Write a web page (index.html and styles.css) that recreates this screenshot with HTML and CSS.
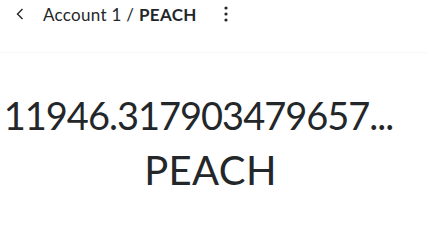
FILE: index.html
```html
<!DOCTYPE html>
<html lang="en">
<head>
<meta charset="UTF-8">
<meta name="viewport" content="width=device-width, initial-scale=1.0">
<title>PEACH</title>
<link rel="stylesheet" href="styles.css">
</head>
<body>

<div class="header">
    <button class="back" aria-label="Back">
        <svg width="8" height="12" viewBox="0 0 8 12"><path d="M6.5 1 L1.5 6 L6.5 11" fill="none" stroke="#24272a" stroke-width="1.4"/></svg>
    </button>
    <div class="title">Account 1 / <b>PEACH</b></div>
    <button class="menu" aria-label="Options">
        <svg width="4" height="16" viewBox="0 0 4 16"><circle cx="2" cy="2" r="1.6"/><circle cx="2" cy="8" r="1.6"/><circle cx="2" cy="14" r="1.6"/></svg>
    </button>
</div>

<div class="balance">
    <div class="amount">11946.317903479657...</div>
    <div class="symbol">PEACH</div>
</div>

</body>
</html>
```

FILE: styles.css
```css
body {
    font-family: Lato, "Open Sans", sans-serif;
    color: #24272a;
    background-color: #ffffff;
    margin: 0;
}

button {
    background: none;
    border: none;
    padding: 0;
    cursor: pointer;
    display: flex;
    align-items: center;
}

.header {
    display: flex;
    align-items: center;
    height: 28px;
    padding-bottom: 24px;
    border-bottom: 1px solid #f6f6f7;
}

.back {
    margin-left: 16px;
    margin-right: 19px;
}

.title {
    font-size: 17px;
    letter-spacing: 0.3px;
}

.title b {
    font-weight: 700;
}

.menu {
    margin-left: 27px;
}

.menu svg {
    fill: #24272a;
}

.balance {
    text-align: center;
    padding-top: 38px;
}

.amount {
    font-size: 38px;
    line-height: 48px;
    letter-spacing: -1px;
    white-space: nowrap;
    margin-left: -30px;
}

.symbol {
    font-size: 40px;
    line-height: 62px;
    letter-spacing: 0.4px;
    margin-left: -6px;
}
```
